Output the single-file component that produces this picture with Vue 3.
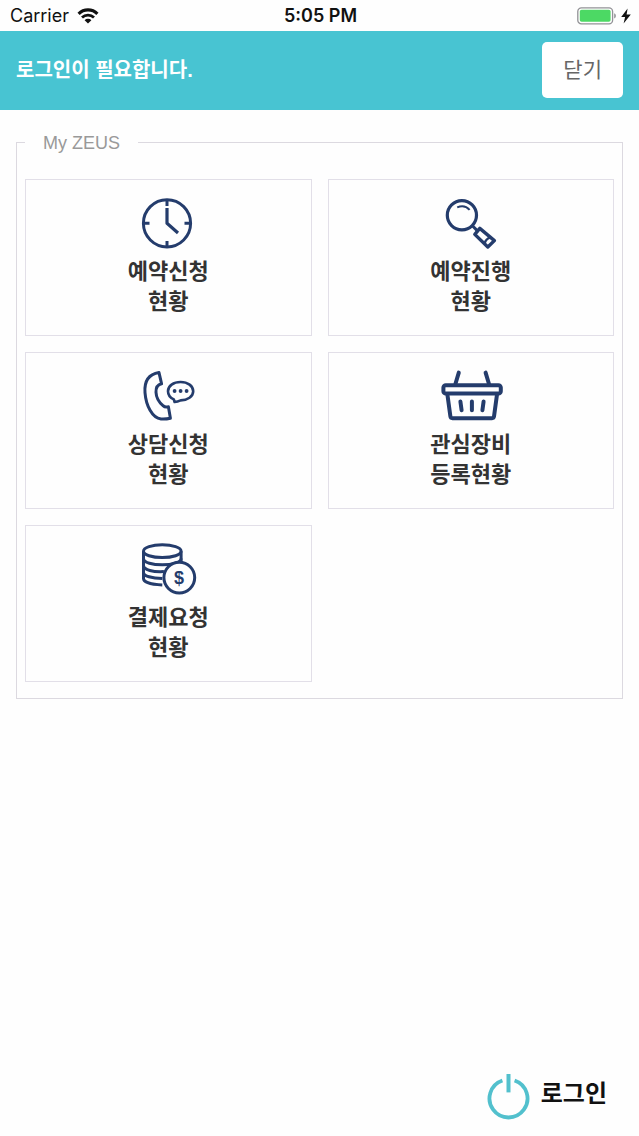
<template>
  <div class="page">
    <div class="status-bar">
      <div class="status-left">
        <span>Carrier</span>
        <svg class="wifi-icon" viewBox="0 0 22 16" aria-hidden="true">
          <path d="M1.6 5.8a13.4 13.4 0 0 1 18.8 0" fill="none" stroke="currentColor" stroke-width="3.2" />
          <path d="M5 9.6a8.6 8.6 0 0 1 12 0" fill="none" stroke="currentColor" stroke-width="2.8" />
          <path d="M11 15.6 7.6 12.2a4.8 4.8 0 0 1 6.8 0z" fill="currentColor" />
        </svg>
      </div>
      <span class="status-time">5:05 PM</span>
      <div class="status-right">
        <svg class="battery-icon" viewBox="0 0 40 18" aria-hidden="true">
          <rect x="0.8" y="0.8" width="34.8" height="16" rx="3.6" fill="none" stroke="#929296" stroke-width="1.3" />
          <rect x="2.8" y="2.8" width="30.8" height="12" rx="1.8" fill="#4cd964" />
          <path d="M37.2 6.2c2.2.8 2.2 4.4 0 5.2z" fill="#929296" />
        </svg>
        <svg class="bolt-icon" viewBox="0 0 10 16" aria-hidden="true">
          <path d="M6.6 0.4 0.2 9h3.9L2.6 15.6 9.8 6.4H5.6z" fill="currentColor" />
        </svg>
      </div>
    </div>

    <header class="header">
      <h1 class="header-title">로그인이 필요합니다.</h1>
      <button class="close-button" type="button">닫기</button>
    </header>

    <main>
      <fieldset class="menu">
        <legend class="menu-legend">My ZEUS</legend>
        <div class="menu-grid">
          <a v-for="item in items" :key="item.icon" class="card" href="#">
            <svg class="card-icon" viewBox="0 0 64 60" aria-hidden="true">
              <g v-if="item.icon === 'clock'">
                <circle cx="31" cy="27.3" r="23.6" />
                <path d="M31 4v6M31 45v6M7.5 27.3h6M48.5 27.3h6" />
                <path d="M31 12v15.3L42 37" stroke-width="3.2" />
              </g>
              <g v-else-if="item.icon === 'search'">
                <circle cx="22.9" cy="19.3" r="14.6" stroke-width="3.2" />
                <path d="M18.2 11.4c4-1.8 9-1.4 12.4 2.4" stroke-width="2" />
                <path d="M33.4 29.8 38 34.4" />
                <path d="M40.8 32.4 55.4 44.6 48.8 51 35.8 38.4z" stroke-width="3.4" />
                <path d="M51.4 41.4c-2.8.8-4.8 2.8-5.8 6" stroke-width="2.4" />
              </g>
              <g v-else-if="item.icon === 'phone'">
                <path d="M23 3.6C12.4 5.4 8.2 13 9 23.6c1 13 7.2 25.4 16 26.4 3 .2 6 0 9.4-.8L32.4 37.8c-2 .6-4 .2-5.4-1.2-4.2-3.6-6.8-8-7-13.4-.2-4.4 1.4-7.4 5.6-8.4z" />
                <path d="M37.8 30.4c-3.8-1.8-5.8-4.8-5.8-8.2 0-5.4 5.4-9.2 12.6-9.2s12.6 4 12.6 9.2-5.6 9.2-12.6 9.2c-1.8.8-3.6 1.4-6 1.6z" stroke-width="2.6" />
                <g class="solid">
                  <circle cx="38.6" cy="22" r="1.9" />
                  <circle cx="44.6" cy="22" r="1.9" />
                  <circle cx="50.6" cy="22" r="1.9" />
                </g>
              </g>
              <g v-else-if="item.icon === 'basket'" class="heavy">
                <path d="M19.8 3.6 16.4 15M46.6 3.6 50 15" />
                <rect x="4.4" y="16.2" width="57.4" height="8.4" rx="2.4" />
                <path d="M8.4 25.6 11.4 47.4q.2 1.8 2 1.8H53q1.8 0 2-1.8L58 25.6" />
                <path d="M21.4 32.4l1.2 8.8M32.9 32.4v8.8M44.6 32.4l-1.2 8.8" />
              </g>
              <g v-else>
                <ellipse cx="26.3" cy="9.2" rx="18.8" ry="6.4" />
                <path d="M7.5 9.2v27.4c0 3.4 7.6 6 18.8 6.4M45.1 9.2v11" />
                <path d="M7.5 16.4c0 8.6 37.6 8.6 37.6 0M7.5 23.6c0 4.4 10 6.6 20.4 6M7.5 30.4c0 3.6 8.4 6 18.8 6" />
                <circle class="coin" cx="43.3" cy="35.6" r="15.4" />
                <text class="coin-sign" x="43" y="42" text-anchor="middle">$</text>
              </g>
            </svg>
            <span v-for="line in item.lines" :key="line" class="card-line">{{ line }}</span>
          </a>
        </div>
      </fieldset>
    </main>

    <footer class="footer">
      <a class="login-link" href="#">
        <svg class="power-icon" viewBox="0 0 44 48" aria-hidden="true">
          <path d="M15.4 7.5a19 19 0 1 0 12.2 0" fill="none" stroke="currentColor" stroke-width="3.8" />
          <path d="M21.5 1v18.4" stroke="currentColor" stroke-width="4" />
        </svg>
        <span class="login-label">로그인</span>
      </a>
    </footer>
  </div>
</template>

<script setup>
const items = [
  { icon: 'clock', lines: ['예약신청', '현황'] },
  { icon: 'search', lines: ['예약진행', '현황'] },
  { icon: 'phone', lines: ['상담신청', '현황'] },
  { icon: 'basket', lines: ['관심장비', '등록현황'] },
  { icon: 'coins', lines: ['결제요청', '현황'] }
]
</script>

<style>
body {
  margin: 0;
  background: #fefefe;
}
</style>

<style scoped>
.page {
  display: flex;
  flex-direction: column;
  min-height: 100vh;
  font-family: 'Liberation Sans', 'Noto Sans CJK KR', sans-serif;
  color: #333;
}

.status-bar {
  display: grid;
  grid-template-columns: 1fr auto 1fr;
  align-items: center;
  height: 31px;
  padding: 0 8px 0 10px;
  font-family: Inter, sans-serif;
  font-size: 18px;
  color: #111;
}

.status-left,
.status-right {
  display: flex;
  align-items: center;
  gap: 8px;
}

.status-right {
  justify-content: flex-end;
  gap: 4px;
}

.status-time {
  font-weight: 600;
}

.wifi-icon {
  width: 22px;
  height: 16px;
}

.battery-icon {
  width: 40px;
  height: 18px;
}

.bolt-icon {
  width: 10px;
  height: 16px;
}

.header {
  display: flex;
  align-items: center;
  justify-content: space-between;
  padding: 11px 16px 12px;
  background: #48c4d2;
}

.header-title {
  margin: 0;
  font-size: 20px;
  font-weight: 700;
  line-height: 28px;
  color: #fff;
}

.close-button {
  padding: 13px 21px;
  border: 0;
  border-radius: 5px;
  background: #fff;
  font-family: inherit;
  font-size: 21px;
  line-height: 30px;
  color: #666;
  cursor: pointer;
}

.menu {
  min-width: 0;
  margin: 20px 16px 0;
  padding: 25px 8px 16px;
  border: 1px solid #dcd9e0;
}

.menu-legend {
  padding: 2px 18px 0;
  font-size: 18px;
  line-height: 22px;
  color: #999;
}

.menu-grid {
  display: grid;
  grid-template-columns: 1fr 1fr;
  gap: 16px;
}

.card {
  display: flex;
  flex-direction: column;
  align-items: center;
  padding: 16px 8px 18px;
  border: 1px solid #e2dfe8;
  text-decoration: none;
  color: #333;
}

.card-icon {
  width: 64px;
  height: 60px;
  margin-bottom: 1px;
  overflow: visible;
  fill: none;
  stroke: #243c6c;
  stroke-width: 3;
  stroke-linejoin: round;
}

.card-icon .heavy {
  stroke-width: 4;
  stroke-linecap: round;
}

.card-icon .solid {
  fill: #243c6c;
  stroke: none;
}

.card-icon .coin {
  fill: #fefefe;
}

.card-icon .coin-sign {
  fill: #243c6c;
  stroke: none;
  font-size: 18px;
  font-weight: 700;
}

.card-line {
  font-size: 22px;
  font-weight: 700;
  line-height: 30px;
}

.footer {
  display: flex;
  justify-content: flex-end;
  margin-top: auto;
  padding: 24px 32px 15px;
}

.login-link {
  display: flex;
  align-items: flex-start;
  gap: 10px;
  text-decoration: none;
  color: #111;
}

.power-icon {
  width: 44px;
  height: 48px;
  color: #52c0cd;
}

.login-label {
  font-size: 24px;
  font-weight: 700;
  line-height: 42px;
}
</style>
